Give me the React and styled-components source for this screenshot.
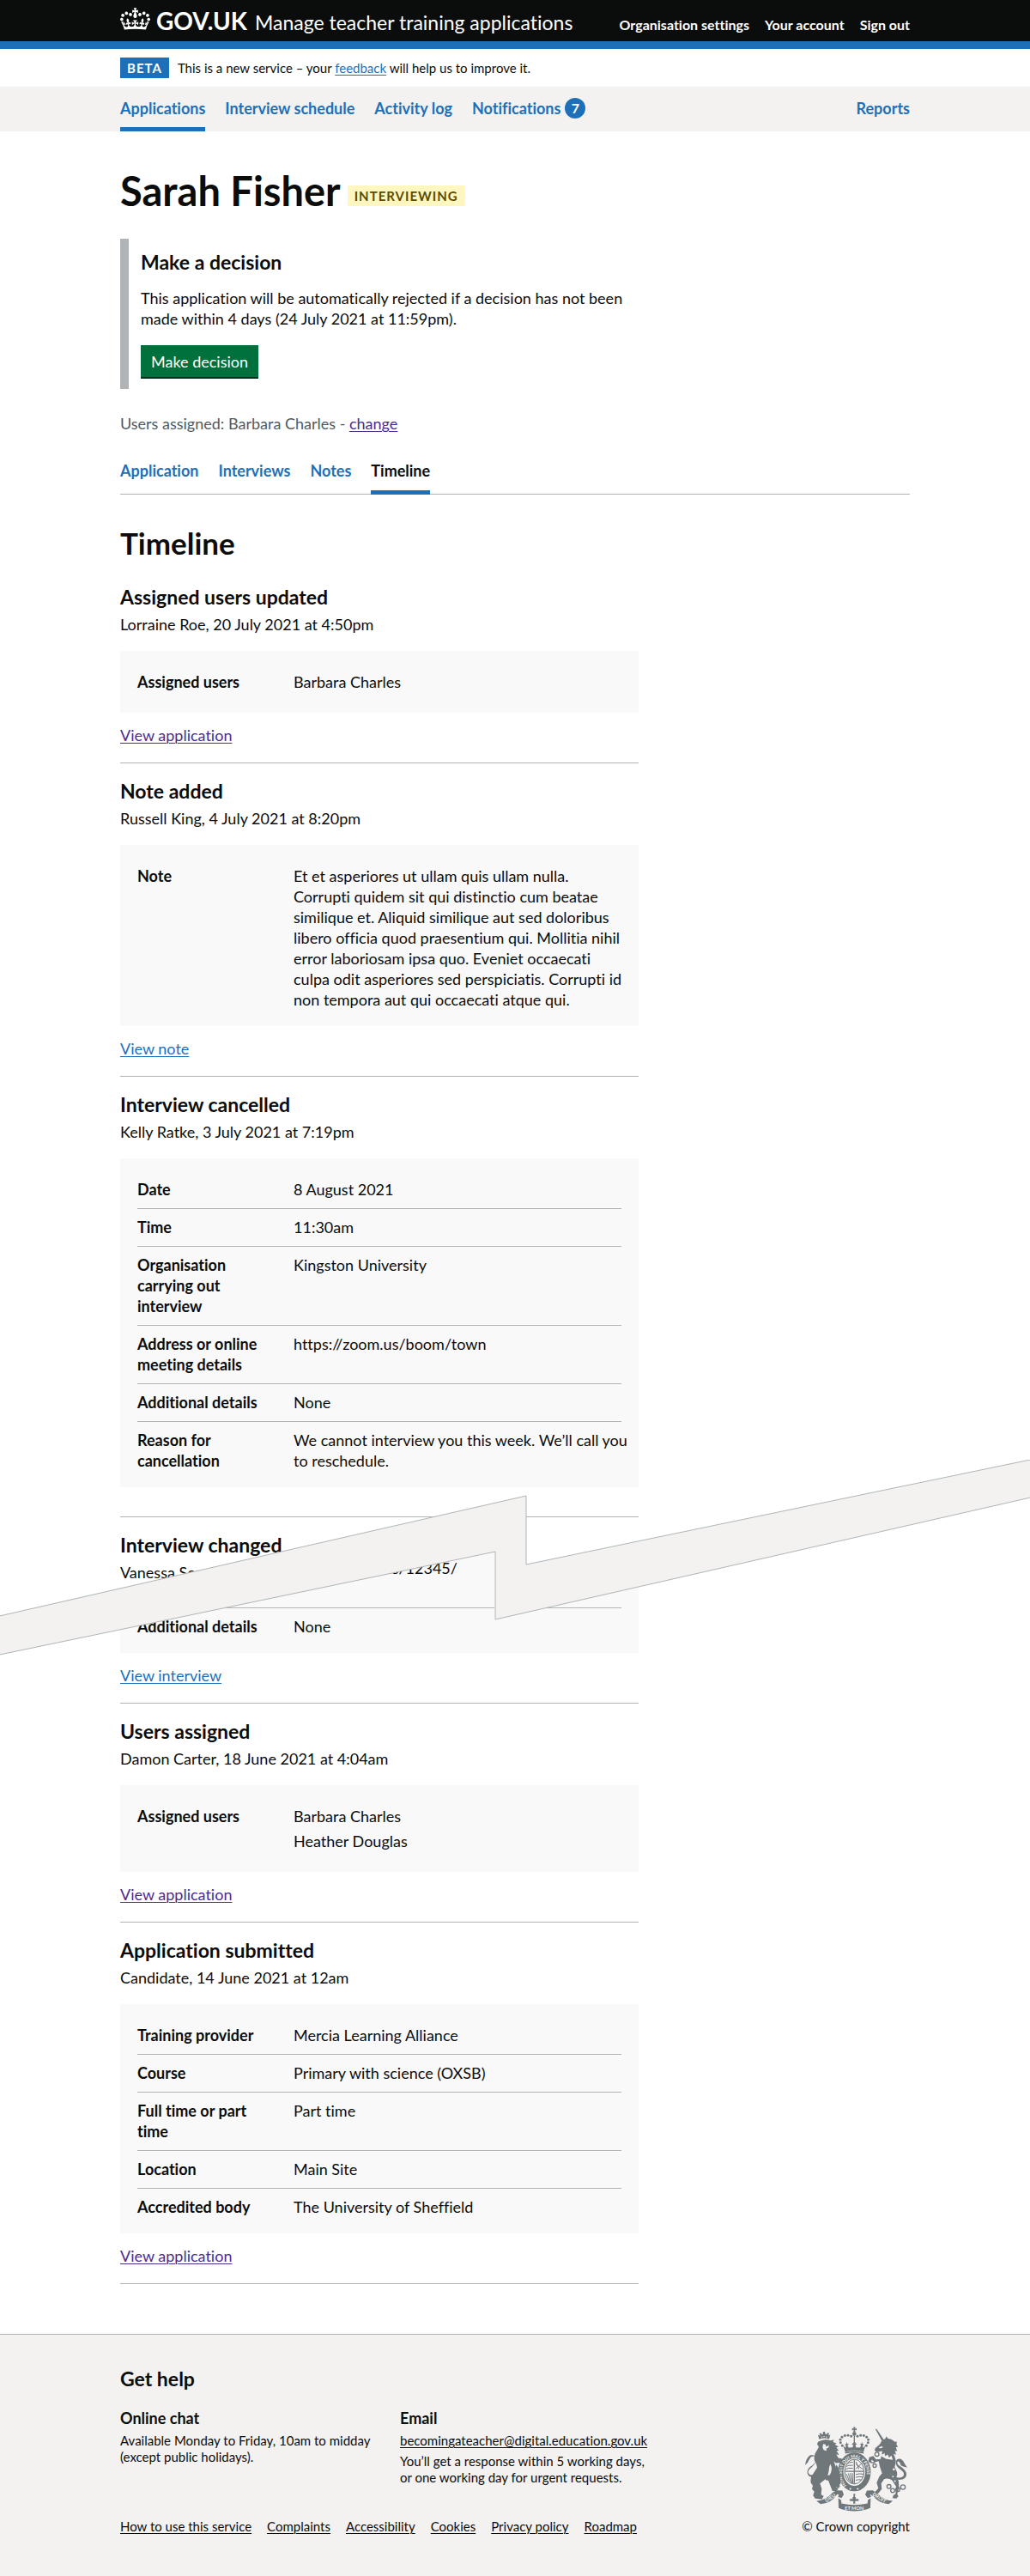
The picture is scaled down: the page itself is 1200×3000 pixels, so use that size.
import React from "react";
import styled, { createGlobalStyle } from "styled-components";

const color = {
  text: "#0b0c0c",
  secondary: "#505a5f",
  link: "#1d70b8",
  visited: "#4c2c92",
  border: "#b1b4b6",
  panel: "#f3f2f1",
  details: "#f9f9f9",
  crest: "#6f777b",
};

const GlobalStyle = createGlobalStyle`
  *, *::before, *::after { box-sizing: border-box; }
  body {
    margin: 0;
    background: #ffffff;
    color: ${color.text};
    font-family: Lato, "Liberation Sans", Arial, sans-serif;
    font-size: 18px;
    line-height: 24px;
    font-variant-ligatures: none;
  }
  h1, h2, h3, p, ul, dl, dd, dt { margin: 0; padding: 0; }
  ul { list-style: none; }
`;

const Container = styled.div`
  max-width: 960px;
  margin: 0 auto;
  padding: 0 20px;
`;

const TwoThirds = styled.div`
  width: calc((100% - 14px) * 2 / 3);
`;

/* Header */

const Header = styled.header`
  background: ${color.text};
  border-bottom: 9px solid ${color.link};
`;

const HeaderRow = styled(Container)`
  display: flex;
  align-items: baseline;
  height: 48px;
  padding-top: 8px;
`;

const LogoLink = styled.a`
  display: flex;
  align-items: baseline;
  gap: 7px;
  color: #ffffff;
  font-size: 28px;
  line-height: 32px;
  font-weight: 700;
  text-decoration: none;
`;

const ServiceLink = styled.a`
  margin-left: 9px;
  color: #ffffff;
  font-size: 23px;
  line-height: 28px;
  text-decoration: none;
`;

const AccountNav = styled.nav`
  display: flex;
  gap: 18px;
  margin-left: auto;
`;

const AccountLink = styled.a`
  color: #ffffff;
  font-size: 16px;
  line-height: 20px;
  font-weight: 700;
  text-decoration: none;
`;

/* Phase banner */

const PhaseBanner = styled(Container)`
  display: flex;
  align-items: center;
  gap: 10px;
  height: 44px;
  font-size: 15px;
  line-height: 20px;
`;

const Tag = styled.strong`
  padding: 0 8px;
  background: ${(p) => (p.$tone === "yellow" ? "#fff7bf" : color.link)};
  color: ${(p) => (p.$tone === "yellow" ? "#594d00" : "#ffffff")};
  font-size: 15px;
  line-height: 24px;
  font-weight: 700;
  letter-spacing: 1px;
  text-transform: uppercase;
`;

const Link = styled.a`
  color: ${(p) => (p.$visited ? color.visited : color.link)};
  text-decoration: underline;
  text-decoration-thickness: 1px;
  text-underline-offset: 2px;
`;

/* Primary navigation */

const PrimaryNav = styled.nav`
  background: ${color.panel};
`;

const PrimaryList = styled(Container).attrs({ as: "ul" })`
  display: flex;
  gap: 23px;
  padding: 0 20px;
`;

const PrimaryItem = styled.li`
  margin-left: ${(p) => (p.$end ? "auto" : "0")};
`;

const PrimaryLink = styled.a`
  display: flex;
  align-items: center;
  gap: 5px;
  padding: 13px 0 10px;
  border-bottom: 5px solid ${(p) => (p.$current ? color.link : "transparent")};
  color: ${color.link};
  font-weight: 700;
  text-decoration: none;
`;

const Badge = styled.span`
  width: 24px;
  height: 24px;
  border-radius: 50%;
  background: ${color.link};
  color: #ffffff;
  font-size: 16px;
  text-align: center;
`;

/* Page heading */

const Main = styled.main`
  padding: 44px 0 58px;
`;

const TitleRow = styled.div`
  display: flex;
  align-items: flex-end;
  gap: 8px;
  margin-bottom: 31px;

  ${Tag} { margin-bottom: 7px; }
`;

const PageTitle = styled.h1`
  font-size: 47px;
  line-height: 50px;
`;

const Inset = styled.section`
  padding: 13px 0 14px 14px;
  border-left: 10px solid ${color.border};
`;

const InsetTitle = styled.h2`
  margin-bottom: 16px;
  font-size: 23px;
  line-height: 28px;
`;

const Button = styled.button`
  display: block;
  height: 37px;
  margin-top: 19px;
  padding: 0 12px;
  border: 0;
  background: #00703c;
  box-shadow: 0 2px 0 #002d18;
  color: #ffffff;
  font: inherit;
`;

const Assigned = styled.p`
  margin-top: 28px;
  color: ${color.secondary};
`;

const Tabs = styled.ul`
  display: flex;
  gap: 23px;
  margin: 31px 0 36px;
  border-bottom: 1px solid ${color.border};
`;

const Tab = styled.a`
  display: block;
  margin-bottom: -1px;
  padding-bottom: 11px;
  border-bottom: 5px solid ${(p) => (p.$current ? color.link : "transparent")};
  color: ${(p) => (p.$current ? color.text : color.link)};
  font-weight: 700;
  text-decoration: none;
`;

/* Timeline */

const TimelineTitle = styled.h2`
  margin-bottom: 11px;
  font-size: 35px;
  line-height: 40px;
`;

const EventBlock = styled(TwoThirds).attrs({ as: "article" })`
  padding: 18px 0 20px;
  border-bottom: 1px solid ${color.border};
`;

const EventTitle = styled.h3`
  margin-bottom: 6px;
  font-size: 23px;
  line-height: 28px;
`;

const EventMeta = styled.p`
  margin-bottom: 19px;
`;

const Details = styled.dl`
  margin-bottom: 14px;
  padding: 15px 20px 9px;
  background: ${color.details};
`;

const DetailRow = styled.div`
  display: grid;
  grid-template-columns: 163px 1fr;
  gap: 19px;
  padding: 9px 0 10px;

  & + & { border-top: 1px solid ${color.border}; }
`;

const Key = styled.dt`
  font-weight: 700;
  white-space: pre-line;
`;

const Value = styled.dd`
  && { margin-right: -8px; }
  white-space: pre-line;
`;

const Person = styled.li`
  margin-bottom: 5px;
`;

/* Torn part of the page: the two sheets share one grid cell, the tear lies over both */

const Torn = styled.div`
  position: relative;
  display: grid;
`;

const UpperSheet = styled.div`
  grid-area: 1 / 1;
  align-self: start;
  padding-top: 18px;
`;

const LowerSheet = styled.div`
  grid-area: 1 / 1;
  padding-top: 23px;
  clip-path: polygon(0 160px, 48% 40px, 48% 119px, 100% -23px, 100% 100%, 0 100%);

  ${EventBlock} { padding-top: 0; }
`;

const Tear = styled.svg`
  position: absolute;
  top: -67px;
  left: 0;
  width: 100%;
  height: 228px;
  pointer-events: none;
`;

/* Footer */

const Footer = styled.footer`
  padding: 37px 0 49px;
  border-top: 1px solid ${color.border};
  background: ${color.panel};
  font-size: 15px;
  line-height: 19px;
`;

const FooterRow = styled(Container)`
  display: flex;
  align-items: flex-end;
  justify-content: space-between;
  gap: 20px;
`;

const FooterMain = styled.div`
  flex: 1;
`;

const FooterTitle = styled.h2`
  margin-bottom: 20px;
  font-size: 23px;
  line-height: 28px;
`;

const HelpGrid = styled.div`
  display: grid;
  grid-template-columns: minmax(0, 312px) minmax(0, 298px);
  gap: 14px;
  margin-bottom: 38px;
`;

const HelpTitle = styled.h3`
  margin-bottom: 5px;
  font-size: 18px;
  line-height: 24px;
`;

const HelpText = styled.p`
  & + & { margin-top: 5px; }
`;

const FooterLinks = styled.ul`
  display: flex;
  flex-wrap: wrap;
  gap: 0 18px;
`;

const FooterLink = styled(Link)`
  color: ${color.text};
`;

const Copyright = styled.a`
  display: flex;
  flex-direction: column;
  align-items: center;
  gap: 8px;
  color: ${color.text};
  text-decoration: none;
`;

function Crown() {
  return (
    <svg width="35" height="26" viewBox="0 0 132 97" fill="currentColor" aria-hidden="true">
      <path d="M25 30.2c3.5 1.5 7.7-.2 9.1-3.7 1.5-3.6-.2-7.8-3.9-9.2-3.6-1.4-7.6.3-9.1 3.9-1.4 3.5.3 7.5 3.9 9zM9 39.5c3.6 1.5 7.8-.2 9.2-3.7 1.5-3.6-.2-7.8-3.9-9.1-3.6-1.5-7.6.2-9.1 3.8-1.4 3.5.3 7.5 3.8 9zM4.4 57.2c3.5 1.5 7.7-.2 9.1-3.8 1.5-3.6-.2-7.7-3.9-9.1-3.5-1.5-7.6.3-9.1 3.8-1.4 3.5.3 7.6 3.9 9.1zm38.3-21.4c3.5 1.5 7.7-.2 9.1-3.8 1.5-3.6-.2-7.7-3.9-9.1-3.6-1.5-7.6.3-9.1 3.8-1.3 3.6.4 7.7 3.9 9.1zm64.4-5.6c-3.6 1.5-7.8-.2-9.1-3.7-1.5-3.6.2-7.8 3.8-9.2 3.6-1.4 7.7.3 9.2 3.9 1.3 3.5-.4 7.5-3.9 9zm15.9 9.3c-3.6 1.5-7.7-.2-9.1-3.7-1.5-3.6.2-7.8 3.7-9.1 3.6-1.5 7.7.2 9.2 3.8 1.5 3.5-.3 7.5-3.8 9zm4.7 17.7c-3.6 1.5-7.8-.2-9.2-3.8-1.5-3.6.2-7.7 3.9-9.1 3.6-1.5 7.7.3 9.2 3.8 1.3 3.5-.4 7.6-3.9 9.1zM89.3 35.8c-3.6 1.5-7.8-.2-9.2-3.8-1.4-3.6.2-7.7 3.9-9.1 3.6-1.5 7.7.3 9.2 3.8 1.4 3.6-.3 7.7-3.9 9.1zM69.7 17.7l8.9 4.7V9.3l-8.9 2.8c-.2-.3-.5-.6-.9-.9L72.4 0H59.6l3.5 11.2c-.3.3-.6.5-.9.9l-8.8-2.8v13.1l8.8-4.7c.3.3.6.7.9.9l-5 15.4v.1c-.2.8-.4 1.6-.4 2.4 0 4.1 3.1 7.5 7 8.1h.2c.3 0 .7.1 1 .1.4 0 .7 0 1-.1h.2c4-.6 7.1-4.1 7.1-8.1 0-.8-.1-1.7-.4-2.4V34l-5.1-15.4c.4-.2.7-.6 1-.9zM66 92.8c16.9 0 32.8 1.1 47.1 3.2 4-16.9 8.9-26.7 14-33.5l-9.6-3.4c1 4.9 1.1 7.2 0 10.2-1.5-1.4-3-4.3-4.2-8.7L108.6 76c2.8-2 5-3.2 7.5-3.3-4.4 9.4-10 11.9-13.6 11.2-4.3-.8-6.3-4.6-5.6-7.9 1-4.7 5.7-5.9 8-.5 4.3-8.7-3-11.4-7.6-8.8 7.1-7.2 7.9-13.5 2.1-21.1-8 6.1-8.1 12.3-4.5 20.8-4.7-5.4-12.1-2.5-9.5 6.2 3.4-5.2 7.9-2 7.2 3.1-.6 4.3-6.4 7.8-13.5 7.2-10.3-.9-10.9-8-11.2-13.8 2.5-.5 7.1 1.8 11 7.3L80.2 60c-4.1 4.4-8 5.3-12.3 5.4 1.4-4.4 8-11.6 8-11.6H55.5s6.4 7.2 7.9 11.6c-4.2-.1-8-1-12.3-5.4l1.4 16.4c3.9-5.5 8.5-7.7 10.9-7.3-.3 5.8-.9 12.8-11.1 13.8-7.2.6-12.9-2.9-13.5-7.2-.7-5 3.8-8.3 7.1-3.1 2.7-8.7-4.6-11.6-9.4-6.2 3.7-8.5 3.6-14.7-4.6-20.8-5.8 7.6-5 13.9 2.2 21.1-4.7-2.6-11.9.1-7.7 8.8 2.3-5.5 7.1-4.2 8.1.5.7 3.3-1.3 7.1-5.7 7.9-3.5.7-9-1.8-13.5-11.2 2.5.1 4.7 1.3 7.5 3.3l-4.7-15.4c-1.2 4.4-2.7 7.2-4.3 8.7-1.1-3-.9-5.3 0-10.2l-9.5 3.4c5 6.9 9.9 16.7 14 33.5 14.8-2.1 30.8-3.2 47.7-3.2z" />
    </svg>
  );
}

function Crest() {
  const arc = [
    [244, 172], [238, 162], [237, 151], [243, 142], [253, 137], [264, 136], [275, 139],
    [328, 172], [334, 162], [335, 151], [329, 142], [319, 137], [308, 136], [297, 139],
  ];
  return (
    <svg width="120" height="99" viewBox="111 106 360 296" fill={color.crest} aria-hidden="true">
      {/* crown */}
      <path d="M282 107h8l-2 6 6-2v8l-6-2 2 8h-8l2-8-6 2v-8l6 2z" />
      <circle cx="286" cy="131" r="7" />
      {arc.map(([x, y]) => <circle key={`${x}-${y}`} cx={x} cy={y} r="4.4" />)}
      <path d="M284 137h4v34h-4zM247 172l8 8 2-9-5-2 6-4 1-6 2 6 6 3-5 3 4 8 14-1 2-9-6-2 6-4 4-9 4 9 6 4-6 2 2 9 14 1 4-8-5-3 6-3 2-6 1 6 6 4-5 2 2 9 8-8-7 21q-32-8-64 0z" />
      <path d="M253 194q33-7 66 0l-1 6q-32-7-64 0z" />
      {/* garter */}
      <ellipse cx="286" cy="264" rx="48" ry="58" fill="none" stroke={color.crest} strokeWidth="19" />
      <path id="garter" d="M261 313A44 54 0 1 1 311 313" fill="none" />
      <text fill={color.panel} fontSize="15" fontWeight="700">
        <textPath href="#garter" startOffset="3">HONI SOIT QUI MAL Y PENSE</textPath>
      </text>
      <circle cx="272" cy="323" r="3" fill={color.panel} />
      <circle cx="298" cy="323" r="3" fill={color.panel} />
      {/* shield */}
      <g fill="none" stroke={color.crest} strokeWidth="3">
        <ellipse cx="286" cy="263" rx="34" ry="43" />
        <path d="M286 221v84M253 262h67" strokeWidth="4" />
        <path d="M259 236q8-7 22-6M257 245q8-6 24-4M256 254q9-5 25-3M291 236l24 18M313 232l-22 22M292 228l10 26M258 271l10 24M265 269l9 33M272 268l6 35M279 268l2 36M291 273q12-5 28-1M291 283q12-5 26-1M291 293q10-4 20-1" />
      </g>
      {/* lion */}
      <path d="M163 150l-4-16 8 4-3-8 6-2 3 6 4-4-1-6 7-1 1 7 5 3 3-6 6 2-3 8 7-3-4 15q-17-6-35 1z" />
      <g fill={color.panel}>
        <circle cx="172" cy="142" r="2" /><circle cx="180" cy="140" r="2" /><circle cx="189" cy="142" r="2" />
      </g>
      <path d="M166 156q15-8 38-2l10-3-2 9 12 3-6 5 13 8-8 3 9 10-8 1 9 15-10-3 7 13 14 3-2 13-20 2-8-6 6 15q2 14 13 22l-3 24-18 3 8 24 10 7-8 11-13-3-12-31-4-15-18 13-9 7 6 18-2 21 9 5-6 12-24-3-7-11 4-13-8-9 3-12-7-10q-3-18 9-33l13-20-3-13q-12-18-4-37l13-22-6-10 3-8z" />
      <path d="M177 166l8 2 3 8 9-6-1 9-8 4 1 7-10-3-4-9zM202 236q10 18-2 40-8 10-16 15 14-20 14-42z" fill={color.panel} />
      <path d="M149 283q-22 2-27-14-3-14 11-24 18-11 20-25 0-9-10-11-10 0-15 13-4 11-14 18 3-22 14-32 12-8 21 2 8 12-2 27-8 10-18 18-8 9-1 16 8 6 21 2z" />
      <path d="M224 238q14 22 14 66l-8 10q-7-30-18-48z" />
      <path d="M186 276q25-4 38 14l12 24-5 7-12-6q-9-21-33-23z" />
      {/* unicorn */}
      <path d="M359 113l6 2 24 36-7 4z" />
      <path d="M384 152l10-4 4-9 5 8q14 2 25 12l7-1-2 9 5 10-7 1 5 13-8-1 4 14-9-3 6 15q4 14-2 30l5 12q7 12 1 24l8 14 1 22-6 23 4 8-7 8-14-2 4-10 7-4 2-26-14-22q-14-9-28-4l-10 15 2 20-11 13-22 11-8-8 17-6 12-13-6-19 9-22 10-11-8-24-4-19-14 4-10-9-3 12-9-6 3-14 14-5 10 12 16-1 4-18 2-10-20 4-7-6 2-8 16-14z" />
      <path d="M371 178l12-4 3 4-10 4zM376 194l8 10 7-6 3 11 9-6 4 11 8-7 4 9 1 6-24-4-21-12z" fill={color.panel} />
      <path d="M425 281q28 8 34-6 2-10-10-18-20-12-18-29 4-13 18-9 10 6 14 18l8 12-16-5q-8-1-9-10-4-8-8-7-5 4 2 13 22 14 27 25 5 17-11 24-18 6-32-3z" />
      <g fill="none" stroke={color.crest} strokeWidth="4">
        <circle cx="365" cy="202" r="7" /><circle cx="350" cy="224" r="8" /><circle cx="357" cy="242" r="6" />
        <circle cx="407" cy="315" r="7" /><circle cx="420" cy="329" r="7" /><circle cx="438" cy="325" r="7" /><circle cx="456" cy="317" r="8" />
      </g>
      <g fill={color.panel}>
        <circle cx="424" cy="255" r="4" /><circle cx="421" cy="280" r="3" /><circle cx="428" cy="296" r="3" />
      </g>
      {/* ribbon and motto */}
      <path d="M153 365q30 1 58-29l13-8 20 1 5 14-8 12-12-4 3-8-6-1q-22 34-58 34zM421 365q-30 1-58-29l-13-8-20 1-6 14 9 12 12-4-4-8 7-1q22 34 58 34z" />
      <path d="M230 355l10 8 1 11q45 10 91 0l1-11 10-8-1 35-14 5q-41 12-84 0l-13-5z" />
      <g fill={color.panel} fontSize="17" fontWeight="700" textAnchor="middle">
        <text x="202" y="360" transform="rotate(-33 202 354)">DIEU</text>
        <text x="286" y="396">ET MON</text>
        <text x="373" y="360" transform="rotate(33 373 354)">DROIT</text>
      </g>
      <path d="M283 340h6v6l-2 3q7 4 3 11 8-6 12 2-2 6-8 3l-6 2 2 8h-8l1-8-5-2q-7 3-9-3 4-8 12-2-4-7 3-11l-1-3z" />
    </svg>
  );
}

const primaryLinks = [
  { label: "Applications", current: true },
  { label: "Interview schedule" },
  { label: "Activity log" },
  { label: "Notifications", count: 7 },
  { label: "Reports", end: true },
];

const tabs = ["Application", "Interviews", "Notes", "Timeline"];

const assigned = (...names) => (
  <ul>{names.map((name) => <Person key={name}>{name}</Person>)}</ul>
);

const viewApplication = { label: "View application", visited: true };

const laterEvents = [
  {
    title: "Assigned users updated",
    meta: "Lorraine Roe, 20 July 2021 at 4:50pm",
    rows: [["Assigned users", assigned("Barbara Charles")]],
    link: viewApplication,
  },
  {
    title: "Note added",
    meta: "Russell King, 4 July 2021 at 8:20pm",
    rows: [[
      "Note",
      "Et et asperiores ut ullam quis ullam nulla.\nCorrupti quidem sit qui distinctio cum beatae similique et. Aliquid similique aut sed doloribus libero officia quod praesentium qui. Mollitia nihil error laboriosam ipsa quo. Eveniet occaecati culpa odit asperiores sed perspiciatis. Corrupti id non tempora aut qui occaecati atque qui.",
    ]],
    link: { label: "View note" },
  },
  {
    title: "Interview cancelled",
    meta: "Kelly Ratke, 3 July 2021 at 7:19pm",
    rows: [
      ["Date", "8 August 2021"],
      ["Time", "11:30am"],
      ["Organisation carrying out interview", "Kingston University"],
      ["Address or online meeting details", "https://zoom.us/boom/town"],
      ["Additional details", "None"],
      ["Reason for cancellation", "We cannot interview you this week. We’ll call you to reschedule."],
    ],
  },
];

// The first row is torn: only the second line of its key is left
const changedEvent = {
  rows: [
    ["\nmeeting details", "https://zoom.us/12345/"],
    ["Additional details", "None"],
  ],
  link: { label: "View interview" },
};

const earlierEvents = [
  {
    title: "Users assigned",
    meta: "Damon Carter, 18 June 2021 at 4:04am",
    rows: [["Assigned users", assigned("Barbara Charles", "Heather Douglas")]],
    link: viewApplication,
  },
  {
    title: "Application submitted",
    meta: "Candidate, 14 June 2021 at 12am",
    rows: [
      ["Training provider", "Mercia Learning Alliance"],
      ["Course", "Primary with science (OXSB)"],
      ["Full time or part time", "Part time"],
      ["Location", "Main Site"],
      ["Accredited body", "The University of Sheffield"],
    ],
    link: viewApplication,
  },
];

function Event({ title, meta, rows, link }) {
  return (
    <EventBlock>
      {title && <EventTitle>{title}</EventTitle>}
      {meta && <EventMeta>{meta}</EventMeta>}
      <Details>
        {rows.map(([key, value]) => (
          <DetailRow key={key}>
            <Key>{key}</Key>
            <Value>{value}</Value>
          </DetailRow>
        ))}
      </Details>
      {link && <p><Link href="#" $visited={link.visited}>{link.label}</Link></p>}
    </EventBlock>
  );
}

export default function App() {
  return (
    <>
      <GlobalStyle />
      <Header>
        <HeaderRow>
          <LogoLink href="#"><Crown />GOV.UK</LogoLink>
          <ServiceLink href="#">Manage teacher training applications</ServiceLink>
          <AccountNav aria-label="Account">
            <AccountLink href="#">Organisation settings</AccountLink>
            <AccountLink href="#">Your account</AccountLink>
            <AccountLink href="#">Sign out</AccountLink>
          </AccountNav>
        </HeaderRow>
      </Header>

      <PhaseBanner>
        <Tag>Beta</Tag>
        <span>This is a new service – your <Link href="#">feedback</Link> will help us to improve it.</span>
      </PhaseBanner>

      <PrimaryNav aria-label="Primary">
        <PrimaryList>
          {primaryLinks.map(({ label, current, count, end }) => (
            <PrimaryItem key={label} $end={end}>
              <PrimaryLink href="#" $current={current}>
                {label}
                {count && <Badge>{count}</Badge>}
              </PrimaryLink>
            </PrimaryItem>
          ))}
        </PrimaryList>
      </PrimaryNav>

      <Main>
        <Container>
          <TitleRow>
            <PageTitle>Sarah Fisher</PageTitle>
            <Tag $tone="yellow">Interviewing</Tag>
          </TitleRow>
          <TwoThirds>
            <Inset>
              <InsetTitle>Make a decision</InsetTitle>
              <p>
                This application will be automatically rejected if a decision has not been
                made within 4 days (24 July 2021 at 11:59pm).
              </p>
              <Button type="button">Make decision</Button>
            </Inset>
          </TwoThirds>
          <Assigned>
            Users assigned: Barbara Charles - <Link href="#" $visited>change</Link>
          </Assigned>
          <Tabs>
            {tabs.map((label) => (
              <li key={label}><Tab href="#" $current={label === "Timeline"}>{label}</Tab></li>
            ))}
          </Tabs>
          <TimelineTitle>Timeline</TimelineTitle>
          {laterEvents.map((event) => <Event key={event.title} {...event} />)}
        </Container>

        <Torn>
          <UpperSheet>
            <Container>
              <EventTitle>Interview changed</EventTitle>
              <p>Vanessa Senger, 1 July</p>
            </Container>
          </UpperSheet>
          <LowerSheet>
            <Container><Event {...changedEvent} /></Container>
          </LowerSheet>
          <Tear viewBox="0 0 1200 228" preserveAspectRatio="none" aria-hidden="true">
            <polygon
              points="-5,183 613,42 613,122 1205,-1 1205,43 577,186 577,107 -5,228"
              fill={color.panel}
              stroke={color.border}
              vectorEffect="non-scaling-stroke"
            />
          </Tear>
        </Torn>

        <Container>
          {earlierEvents.map((event) => <Event key={event.title} {...event} />)}
        </Container>
      </Main>

      <Footer>
        <FooterRow>
          <FooterMain>
            <FooterTitle>Get help</FooterTitle>
            <HelpGrid>
              <section>
                <HelpTitle>Online chat</HelpTitle>
                <HelpText>Available Monday to Friday, 10am to midday (except public holidays).</HelpText>
              </section>
              <section>
                <HelpTitle>Email</HelpTitle>
                <HelpText>
                  <FooterLink href="mailto:becomingateacher@digital.education.gov.uk">
                    becomingateacher@digital.education.gov.uk
                  </FooterLink>
                </HelpText>
                <HelpText>You’ll get a response within 5 working days, or one working day for urgent requests.</HelpText>
              </section>
            </HelpGrid>
            <FooterLinks>
              {["How to use this service", "Complaints", "Accessibility", "Cookies", "Privacy policy", "Roadmap"].map((label) => (
                <li key={label}><FooterLink href="#">{label}</FooterLink></li>
              ))}
            </FooterLinks>
          </FooterMain>
          <Copyright href="#">
            <Crest />
            © Crown copyright
          </Copyright>
        </FooterRow>
      </Footer>
    </>
  );
}
